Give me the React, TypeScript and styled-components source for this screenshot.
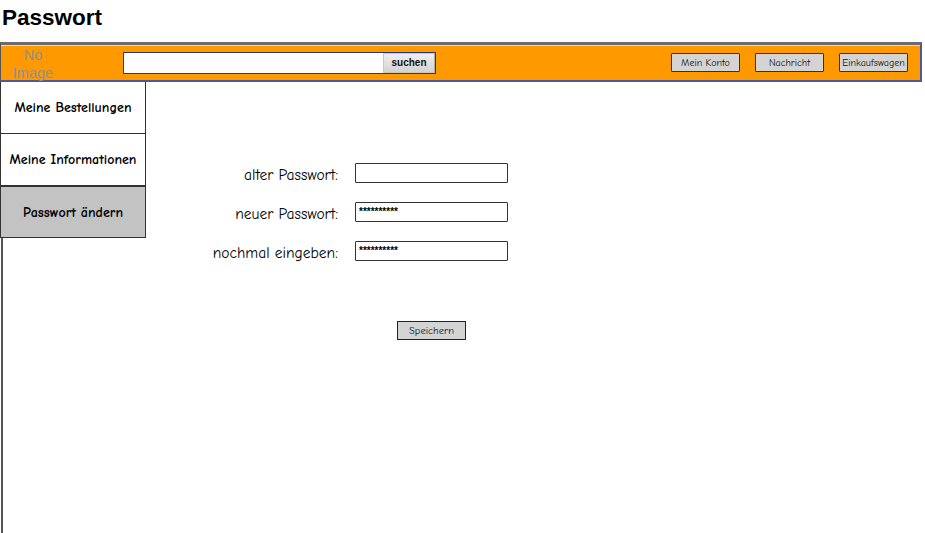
import React from "react";
import styled, { createGlobalStyle } from "styled-components";

const Global = createGlobalStyle`
  html, body { margin: 0; padding: 0; background: #fff; }
  body { width: 925px; height: 533px; overflow: hidden; }
`;

const hand = `"Comic Sans MS", "Comic Neue", "DejaVu Sans", sans-serif`;

const Page = styled.div`
  width: 925px;
  height: 533px;
  display: flex;
  flex-direction: column;
  font-family: ${hand};
  color: #000;
`;

const Title = styled.h1`
  margin: 0;
  padding: 5px 0 0 2px;
  height: 37px;
  box-sizing: border-box;
  font-family: "Liberation Sans", Arial, sans-serif;
  font-weight: bold;
  font-size: 22.5px;
  line-height: 26px;
`;

const Header = styled.div`
  margin-top: 5px;
  width: 922px;
  height: 40px;
  box-sizing: border-box;
  border-top: 3px solid #6b6b75;
  border-left: 1px solid #555;
  border-right: 2px solid #4a5a9a;
  border-bottom: 2px solid #4a5a9a;
  background: #ff9900;
  display: flex;
  align-items: center;
  box-shadow: inset 0 1px 0 #d9d9e6;
`;

const NoImage = styled.div`
  width: 64px;
  text-align: center;
  color: #909090;
  font-family: "Liberation Sans", Arial, sans-serif;
  font-size: 14.5px;
  line-height: 18px;
  padding-top: 2px;
`;

const Search = styled.div`
  margin-left: 58px;
  width: 313px;
  height: 22px;
  box-sizing: border-box;
  border: 1px solid #2a3a7a;
  background: #fff;
  display: flex;
  justify-content: flex-end;
  align-items: stretch;
`;

const SearchButton = styled.button`
  width: 52px;
  padding: 0;
  border: 1px solid #c8c8c8;
  border-right: 1px solid #aaa;
  background: linear-gradient(#efefef, #d3d3d3);
  font-family: "Liberation Sans", Arial, sans-serif;
  font-weight: bold;
  font-size: 10px;
  color: #111;
`;

const Spacer = styled.div`
  flex: 1;
`;

const NavButtons = styled.div`
  display: flex;
  gap: 15px;
  margin-right: 12px;
`;

const NavButton = styled.button`
  width: 69px;
  height: 19px;
  padding: 0;
  box-sizing: border-box;
  border: 1px solid #333;
  border-radius: 1px;
  background: #d4d4d4;
  font-family: ${hand};
  font-size: 10px;
  color: #111;
  white-space: nowrap;
`;

const Body = styled.div`
  flex: 1;
  display: flex;
`;

const Sidebar = styled.div`
  width: 146px;
  display: flex;
  flex-direction: column;
  border-left: 2px solid #555;
  box-sizing: border-box;
  margin-left: 1px;
`;

const SideItem = styled.div<{ $active?: boolean }>`
  height: 52px;
  margin-left: -3px;
  margin-right: 1px;
  box-sizing: border-box;
  border: 1px solid #333;
  border-top: ${(p) => (p.$active ? "1px solid #333" : "none")};
  background: ${(p) => (p.$active ? "#c3c3c3" : "#fff")};
  display: flex;
  align-items: center;
  justify-content: center;
  font-weight: bold;
  font-size: 14px;
  white-space: nowrap;
  &:first-child { border-top: none; }
`;

const Main = styled.div`
  flex: 1;
  display: flex;
  flex-direction: column;
  padding-top: 81px;
`;

const Form = styled.div`
  display: grid;
  grid-template-columns: 191px 153px;
  grid-auto-rows: 20px;
  column-gap: 17px;
  row-gap: 19px;
  align-items: center;
`;

const Label = styled.label`
  text-align: right;
  font-size: 15.5px;
  line-height: 20px;
  white-space: nowrap;
  padding-top: 3px;
`;

const Field = styled.div`
  height: 20px;
  box-sizing: border-box;
  border: 1px solid #333;
  border-radius: 1px;
  background: #fff;
  font-family: "Liberation Sans", Arial, sans-serif;
  font-size: 10px;
  font-weight: bold;
  line-height: 18px;
  padding-left: 3px;
`;

const SaveRow = styled.div`
  display: flex;
  padding-left: 250px;
  margin-top: 60px;
`;

const SaveButton = styled.button`
  width: 69px;
  height: 19px;
  padding: 0;
  box-sizing: border-box;
  border: 1px solid #222;
  background: #d4d4d4;
  font-family: ${hand};
  font-size: 10.5px;
  color: #111;
`;

export default function App() {
  return (
    <Page>
      <Global />
      <Title>Passwort</Title>
      <Header>
        <NoImage>
          No
          <br />
          Image
        </NoImage>
        <Search>
          <SearchButton>suchen</SearchButton>
        </Search>
        <Spacer />
        <NavButtons>
          <NavButton>Mein Konto</NavButton>
          <NavButton>Nachricht</NavButton>
          <NavButton>Einkaufswagen</NavButton>
        </NavButtons>
      </Header>
      <Body>
        <Sidebar>
          <SideItem>Meine Bestellungen</SideItem>
          <SideItem>Meine Informationen</SideItem>
          <SideItem $active>Passwort ändern</SideItem>
        </Sidebar>
        <Main>
          <Form>
            <Label>alter Passwort:</Label>
            <Field />
            <Label>neuer Passwort:</Label>
            <Field>**********</Field>
            <Label>nochmal eingeben:</Label>
            <Field>**********</Field>
          </Form>
          <SaveRow>
            <SaveButton>Speichern</SaveButton>
          </SaveRow>
        </Main>
      </Body>
    </Page>
  );
}
